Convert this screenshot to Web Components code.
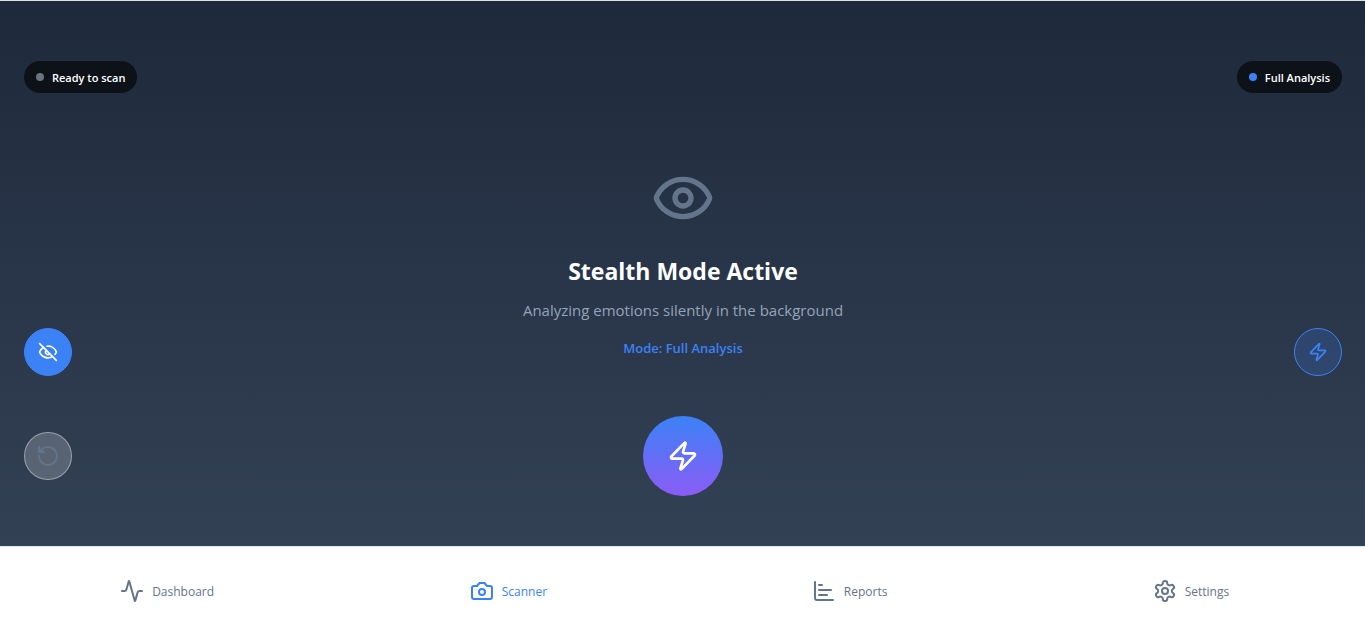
<!DOCTYPE html>
<html lang="en">
<head>
<meta charset="utf-8">
<meta name="viewport" content="width=device-width, initial-scale=1">
<title>Scanner</title>
<style>
  body { margin: 0; font-family: "Open Sans", "Noto Sans", sans-serif; }
</style>
</head>
<body>
<scanner-app></scanner-app>
<script>
const ICONS = {
  eye: '<path d="M2.062 12.348a1 1 0 0 1 0-.696 10.75 10.75 0 0 1 19.876 0 1 1 0 0 1 0 .696 10.75 10.75 0 0 1-19.876 0"/><circle cx="12" cy="12" r="3"/>',
  'eye-off': '<path d="M10.733 5.076a10.744 10.744 0 0 1 11.205 6.575 1 1 0 0 1 0 .696 10.747 10.747 0 0 1-1.444 2.49"/><path d="M14.084 14.158a3 3 0 0 1-4.242-4.242"/><path d="M17.479 17.499a10.75 10.75 0 0 1-15.417-5.151 1 1 0 0 1 0-.696 10.75 10.75 0 0 1 4.446-5.143"/><path d="m2 2 20 20"/>',
  zap: '<path d="M4 14a1 1 0 0 1-.78-1.63l9.9-10.2a.5.5 0 0 1 .86.46l-1.92 6.02A1 1 0 0 0 13 10h7a1 1 0 0 1 .78 1.63l-9.9 10.2a.5.5 0 0 1-.86-.46l1.92-6.02A1 1 0 0 0 11 14z"/>',
  reset: '<path d="M3 12a9 9 0 1 0 9-9 9.75 9.75 0 0 0-6.74 2.74L3 8"/><path d="M3 3v5h5"/>',
  activity: '<path d="M22 12h-2.48a2 2 0 0 0-1.93 1.46l-2.35 8.36a.25.25 0 0 1-.48 0L9.24 2.18a.25.25 0 0 0-.48 0l-2.35 8.36A2 2 0 0 1 4.49 12H2"/>',
  camera: '<path d="M14.5 4h-5L7 7H4a2 2 0 0 0-2 2v9a2 2 0 0 0 2 2h16a2 2 0 0 0 2-2V9a2 2 0 0 0-2-2h-3l-2.5-3z"/><circle cx="12" cy="13" r="3"/>',
  chart: '<path d="M3 3v16a2 2 0 0 0 2 2h16"/><path d="M7 16h8"/><path d="M7 11h12"/><path d="M7 6h3"/>',
  settings: '<path d="M12.22 2h-.44a2 2 0 0 0-2 2v.18a2 2 0 0 1-1 1.73l-.43.25a2 2 0 0 1-2 0l-.15-.08a2 2 0 0 0-2.73.73l-.22.38a2 2 0 0 0 .73 2.73l.15.1a2 2 0 0 1 1 1.72v.51a2 2 0 0 1-1 1.74l-.15.09a2 2 0 0 0-.73 2.73l.22.38a2 2 0 0 0 2.73.73l.15-.08a2 2 0 0 1 2 0l.43.25a2 2 0 0 1 1 1.73V20a2 2 0 0 0 2 2h.44a2 2 0 0 0 2-2v-.18a2 2 0 0 1 1-1.73l.43-.25a2 2 0 0 1 2 0l.15.08a2 2 0 0 0 2.73-.73l.22-.39a2 2 0 0 0-.73-2.73l-.15-.08a2 2 0 0 1-1-1.74v-.5a2 2 0 0 1 1-1.74l.15-.09a2 2 0 0 0 .73-2.73l-.22-.38a2 2 0 0 0-2.73-.73l-.15.08a2 2 0 0 1-2 0l-.43-.25a2 2 0 0 1-1-1.73V4a2 2 0 0 0-2-2z"/><circle cx="12" cy="12" r="3"/>'
};

class LineIcon extends HTMLElement {
  constructor() {
    super();
    this.attachShadow({ mode: 'open' }).innerHTML = `
      <style>
        :host { display: block; flex: none; width: var(--icon-size, 24px); height: var(--icon-size, 24px); }
        svg { display: block; width: 100%; height: 100%; fill: none; stroke: currentColor; stroke-width: 2; stroke-linecap: round; stroke-linejoin: round; }
      </style>
      <svg viewBox="0 0 24 24" aria-hidden="true">${ICONS[this.getAttribute('name')]}</svg>`;
  }
}

class StatusPill extends HTMLElement {
  constructor() {
    super();
    this.attachShadow({ mode: 'open' }).innerHTML = `
      <style>
        :host { display: flex; align-items: center; gap: 8px; height: 32px; padding: 0 12px; box-sizing: border-box; border-radius: 16px; background: #0d1219; color: #fff; font-size: 11px; font-weight: 600; line-height: 16px; white-space: nowrap; }
        i { width: 8px; height: 8px; border-radius: 50%; background: var(--dot, #6b7280); }
        span { padding-top: 1px; }
      </style>
      <i></i><span><slot></slot></span>`;
  }
}

class RoundButton extends HTMLElement {
  constructor() {
    super();
    const off = this.hasAttribute('disabled') ? 'disabled' : '';
    this.attachShadow({ mode: 'open' }).innerHTML = `
      <style>
        :host { display: block; --size: 48px; --icon-size: 20px; }
        button { display: grid; place-items: center; width: var(--size); height: var(--size); margin: 0; padding: 0; box-sizing: border-box; border: 1px solid #3b82f6; border-radius: 50%; background: #3b82f6; color: #fff; cursor: pointer; }
        :host([kind="outline"]) button { background: rgba(59, 130, 246, .2); color: #3b82f6; }
        :host([kind="muted"]) { --icon-size: 24px; }
        :host([kind="muted"]) button { background: rgba(255, 255, 255, .2); border-color: rgba(255, 255, 255, .4); color: #64748b; cursor: default; }
        :host([kind="primary"]) { --size: 80px; --icon-size: 32px; }
        :host([kind="primary"]) button { border: 0; background: linear-gradient(#3b82f6, #8b5cf6); }
      </style>
      <button type="button" aria-label="${this.getAttribute('label')}" ${off}><line-icon name="${this.getAttribute('icon')}"></line-icon></button>`;
  }
}

class StealthHero extends HTMLElement {
  constructor() {
    super();
    this.attachShadow({ mode: 'open' }).innerHTML = `
      <style>
        :host { display: flex; flex-direction: column; align-items: center; text-align: center; }
        line-icon { --icon-size: 64px; color: #64748b; margin-bottom: 24px; }
        h1 { margin: 0 0 10px; font-size: 23px; line-height: 34px; font-weight: 700; color: #fff; }
        p { margin: 0 0 16px; font-size: 15px; line-height: 24px; color: #94a3b8; }
        strong { font-size: 13px; line-height: 20px; font-weight: 600; color: #3b82f6; }
      </style>
      <line-icon name="eye"></line-icon>
      <h1>Stealth Mode Active</h1>
      <p>Analyzing emotions silently in the background</p>
      <strong>Mode: Full Analysis</strong>`;
  }
}

class ScannerStage extends HTMLElement {
  constructor() {
    super();
    this.attachShadow({ mode: 'open' }).innerHTML = `
      <style>
        :host { display: grid; grid-template-columns: 1fr auto 1fr; box-sizing: border-box; padding: 60px 23px 50px 24px; background: linear-gradient(#1e293b, #334155); }
        .side { display: flex; flex-direction: column; justify-content: space-between; align-items: flex-start; }
        .right { align-items: flex-end; }
        .controls { display: grid; gap: 56px; grid-template-rows: 48px 48px; padding-bottom: 16px; }
        .main { display: flex; flex-direction: column; align-items: center; justify-content: space-between; gap: 48px; padding-top: 105px; }
      </style>
      <div class="side">
        <status-pill>Ready to scan</status-pill>
        <div class="controls">
          <round-button icon="eye-off" label="Toggle stealth mode"></round-button>
          <round-button kind="muted" icon="reset" label="Reset" disabled></round-button>
        </div>
      </div>
      <div class="main">
        <stealth-hero></stealth-hero>
        <round-button kind="primary" icon="zap" label="Start scan"></round-button>
      </div>
      <div class="side right">
        <status-pill style="--dot:#3b82f6">Full Analysis</status-pill>
        <div class="controls">
          <round-button kind="outline" icon="zap" label="Change analysis mode"></round-button>
        </div>
      </div>`;
  }
}

class NavTab extends HTMLElement {
  constructor() {
    super();
    this.attachShadow({ mode: 'open' }).innerHTML = `
      <style>
        :host { display: block; flex: 1; color: #64748b; }
        :host([active]) { color: #3b82f6; }
        a { display: flex; justify-content: center; align-items: center; padding: 31px 0 28px; color: inherit; text-decoration: none; font-size: 12px; line-height: 24px; font-weight: 500; }
        span { padding: 2px 7px 0 8px; }
      </style>
      <a href="#${this.getAttribute('icon')}"><line-icon name="${this.getAttribute('icon')}"></line-icon><span><slot></slot></span></a>`;
  }
}

class TabBar extends HTMLElement {
  constructor() {
    super();
    this.attachShadow({ mode: 'open' }).innerHTML = `
      <style>
        :host { display: block; background: #fff; border-top: 1px solid #e2e8f0; }
        nav { display: flex; }
      </style>
      <nav aria-label="Main"><slot></slot></nav>`;
  }
}

class ScannerApp extends HTMLElement {
  constructor() {
    super();
    this.attachShadow({ mode: 'open' }).innerHTML = `
      <style>
        :host { display: flex; flex-direction: column; min-height: 100vh; box-sizing: border-box; border-top: 1px solid #dde3e1; }
        scanner-stage { flex: 1; }
      </style>
      <scanner-stage></scanner-stage>
      <tab-bar>
        <nav-tab icon="activity">Dashboard</nav-tab>
        <nav-tab icon="camera" active>Scanner</nav-tab>
        <nav-tab icon="chart">Reports</nav-tab>
        <nav-tab icon="settings">Settings</nav-tab>
      </tab-bar>`;
  }
}

customElements.define('line-icon', LineIcon);
customElements.define('status-pill', StatusPill);
customElements.define('round-button', RoundButton);
customElements.define('stealth-hero', StealthHero);
customElements.define('scanner-stage', ScannerStage);
customElements.define('nav-tab', NavTab);
customElements.define('tab-bar', TabBar);
customElements.define('scanner-app', ScannerApp);
</script>
</body>
</html>
